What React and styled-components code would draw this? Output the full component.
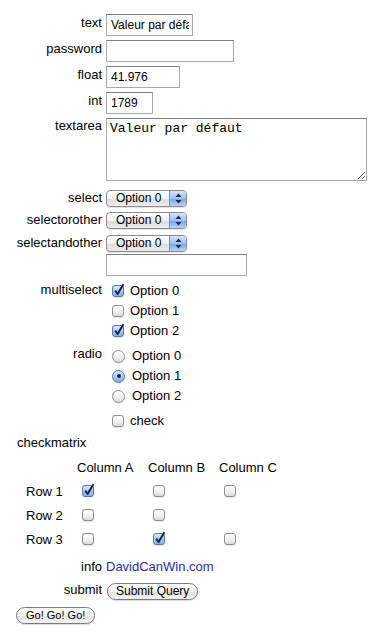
import React from 'react';
import styled, { createGlobalStyle, css } from 'styled-components';

const GlobalStyle = createGlobalStyle`
  html, body { margin: 0; padding: 0; background: #fff; }
  body { font-family: "Liberation Sans", Arial, sans-serif; font-size: 13px; color: #000; }
`;

const Page = styled.div`
  padding: 14px 0 12px 16px;
  width: 379px;
  box-sizing: border-box;
`;

const Row = styled.div`
  display: grid;
  grid-template-columns: 86px 1fr;
  column-gap: 4px;
  align-items: start;
  margin-top: ${p => p.$mt || 0}px;
`;

const Label = styled.div`
  text-align: right;
  line-height: 15px;
  padding-top: ${p => (p.$pad == null ? 1 : p.$pad)}px;
  white-space: nowrap;
`;

const Field = styled.div`
  display: flex;
  flex-direction: column;
  align-items: flex-start;
  gap: ${p => p.$gap || 0}px;
`;

const TextInput = styled.input`
  box-sizing: border-box;
  width: ${p => p.$w}px;
  height: 22px;
  margin: 0;
  padding: 0 3px 0 4px;
  border: 1px solid #a9a9a9;
  border-top-color: #7f7f7f;
  border-radius: 0;
  font-family: "Liberation Sans", Arial, sans-serif;
  font-size: 12px;
  color: #000;
  background: #fff;
  outline: none;
`;

const TextArea = styled.textarea`
  box-sizing: border-box;
  width: 261px;
  height: 63px;
  margin: 0;
  padding: 2px 3px;
  border: 1px solid #a9a9a9;
  border-top-color: #7f7f7f;
  font-family: "Liberation Mono", "Courier New", monospace;
  font-size: 13px;
  line-height: 15px;
  color: #000;
  resize: both;
  outline: none;
`;

const Popup = styled.div`
  box-sizing: border-box;
  width: 81px;
  height: 17px;
  display: flex;
  border: 1px solid #8d8d8d;
  border-radius: 4px;
  overflow: hidden;
  background: linear-gradient(#ffffff, #f1f1f1 50%, #dcdcdc 51%, #ececec);
  box-shadow: 0 1px 1px rgba(0, 0, 0, 0.12);
`;

const PopupText = styled.span`
  flex: 1;
  padding-left: 9px;
  font-size: 12px;
  line-height: 15px;
`;

const PopupArrows = styled.span`
  width: 16px;
  display: flex;
  align-items: center;
  justify-content: center;
  border-left: 1px solid #6d8fc2;
  background: linear-gradient(#d4e4f8, #9dc0ef 50%, #77a6e6 51%, #b4d2f6);
`;

const Select = ({ value }) => (
  <Popup>
    <PopupText>{value}</PopupText>
    <PopupArrows>
      <svg width="7" height="11" viewBox="0 0 7 11">
        <path d="M3.5 0.5 L6.5 4 L0.5 4 Z M3.5 10.5 L6.5 7 L0.5 7 Z" fill="#1d2c4a" />
      </svg>
    </PopupArrows>
  </Popup>
);

const Item = styled.label`
  display: flex;
  align-items: center;
  height: 20px;
  line-height: 20px;
  padding-left: 6px;
  gap: ${p => (p.$radio ? 7 : 6)}px;
`;

const boxBase = css`
  box-sizing: border-box;
  width: 12px;
  height: 12px;
  flex: none;
  position: relative;
  border: 1px solid ${p => (p.$on ? '#5878a8' : '#8e8e8e')};
  background: ${p =>
    p.$on
      ? 'linear-gradient(#dbe8f8, #a9c7ee 55%, #84aee6)'
      : 'linear-gradient(#ffffff, #f0f0f0 55%, #dadada)'};
  box-shadow: 0 1px 1px rgba(0, 0, 0, 0.1);
`;

const Box = styled.span`
  ${boxBase}
  border-radius: 3px;
  & > svg {
    position: absolute;
    left: 0px;
    top: -3px;
  }
`;

const Round = styled.span`
  ${boxBase}
  width: 13px;
  height: 13px;
  border-radius: 50%;
  &::after {
    content: '';
    display: ${p => (p.$on ? 'block' : 'none')};
    position: absolute;
    left: 3.5px;
    top: 3.5px;
    width: 4px;
    height: 4px;
    border-radius: 50%;
    background: #1b2440;
  }
`;

const Check = ({ on }) => (
  <Box $on={on}>
    {on && (
      <svg width="12" height="13" viewBox="0 0 12 13">
        <path d="M2.2 7.6 L4.6 11 L10.4 1.2" fill="none" stroke="#1b2440" strokeWidth="2" strokeLinejoin="round" />
      </svg>
    )}
  </Box>
);

const Group = styled.div`
  display: flex;
  flex-direction: column;
`;

const MatrixTitle = styled.div`
  line-height: 15px;
  margin-top: 4px;
  padding-left: 1px;
`;

const Matrix = styled.div`
  display: grid;
  grid-template-columns: 49px 71px 71px 71px;
  grid-auto-rows: 24px;
  margin-top: 5px;
  padding-left: 10px;
  align-items: center;
`;

const Head = styled.div`
  padding-left: 2px;
  white-space: nowrap;
`;

const Cell = styled.div`
  display: flex;
  padding-left: 7px;
`;

const Link = styled.a`
  color: #2b2ba6;
  text-decoration: none;
  line-height: 15px;
  padding-top: 1px;
`;

const Button = styled.button`
  box-sizing: border-box;
  height: 17px;
  margin: ${p => p.$m || '0'};
  padding: 0 ${p => p.$px || 8}px;
  border: 1px solid #7a7a7a;
  border-radius: 9px;
  background: linear-gradient(#ffffff, #f2f2f2 50%, #e2e2e2 51%, #f4f4f4);
  box-shadow: 0 1px 1px rgba(0, 0, 0, 0.15);
  font-family: "Liberation Sans", Arial, sans-serif;
  font-size: ${p => p.$fs || 12}px;
  line-height: 15px;
  color: #000;
`;

const matrix = [
  ['Row 1', [true, false, false]],
  ['Row 2', [false, false, null]],
  ['Row 3', [false, true, false]],
];

export default function App() {
  return (
    <Page>
      <GlobalStyle />
      <Row>
        <Label>text</Label>
        <TextInput $w={87} defaultValue="Valeur par défaut" />
      </Row>
      <Row $mt={4}>
        <Label>password</Label>
        <TextInput $w={128} type="password" />
      </Row>
      <Row $mt={4}>
        <Label>float</Label>
        <TextInput $w={74} defaultValue="41.976" />
      </Row>
      <Row $mt={4}>
        <Label>int</Label>
        <TextInput $w={47} defaultValue="1789" />
      </Row>
      <Row $mt={4}>
        <Label $pad={0}>textarea</Label>
        <TextArea defaultValue="Valeur par défaut" />
      </Row>
      <Row $mt={9}>
        <Label $pad={0}>select</Label>
        <Select value="Option 0" />
      </Row>
      <Row $mt={5}>
        <Label $pad={0}>selectorother</Label>
        <Select value="Option 0" />
      </Row>
      <Row $mt={6}>
        <Label $pad={0}>selectandother</Label>
        <Field $gap={2}>
          <Select value="Option 0" />
          <TextInput $w={141} />
        </Field>
      </Row>
      <Row $mt={5}>
        <Label>multiselect</Label>
        <Group>
          <Item><Check on />Option 0</Item>
          <Item><Check />Option 1</Item>
          <Item><Check on />Option 2</Item>
        </Group>
      </Row>
      <Row $mt={5}>
        <Label $pad={0}>radio</Label>
        <Group>
          <Item $radio><Round />Option 0</Item>
          <Item $radio><Round $on />Option 1</Item>
          <Item $radio><Round />Option 2</Item>
        </Group>
      </Row>
      <Row $mt={5}>
        <span />
        <Item><Check />check</Item>
      </Row>
      <MatrixTitle>checkmatrix</MatrixTitle>
      <Matrix>
        <span />
        <Head>Column A</Head>
        <Head>Column B</Head>
        <Head>Column C</Head>
        {matrix.map(([name, cells]) => (
          <React.Fragment key={name}>
            <div>{name}</div>
            {cells.map((c, i) => (
              <Cell key={i}>{c !== null && <Check on={c} />}</Cell>
            ))}
          </React.Fragment>
        ))}
      </Matrix>
      <Row $mt={7}>
        <Label>info</Label>
        <Link href="#">DavidCanWin.com</Link>
      </Row>
      <Row $mt={7}>
        <Label>submit</Label>
        <Field>
          <Button $m="2px 0 0 1px">Submit Query</Button>
        </Field>
      </Row>
      <Button $m="7px 0 0 0" $fs={11} $px={9}>Go! Go! Go!</Button>
    </Page>
  );
}
